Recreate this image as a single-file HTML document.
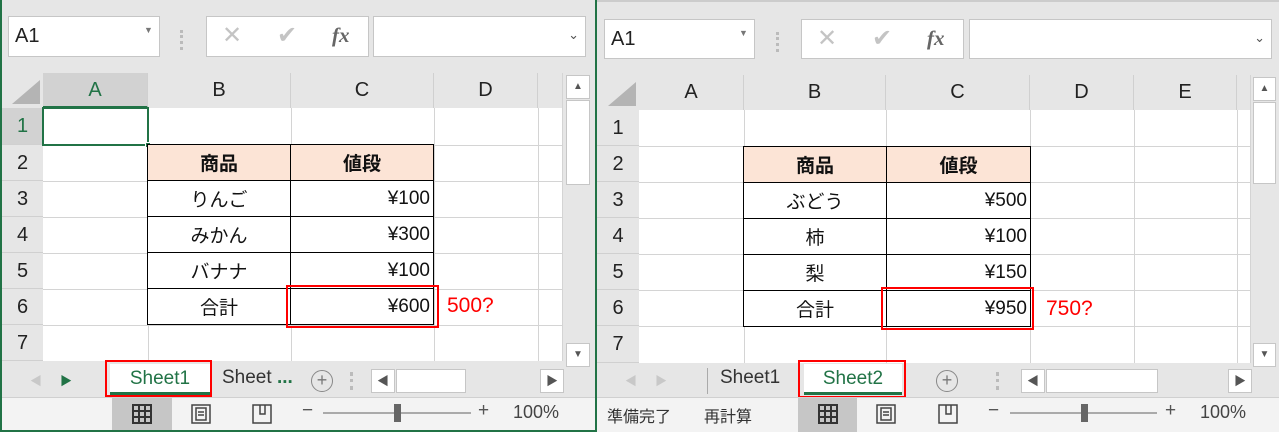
<!DOCTYPE html>
<html><head><meta charset="utf-8"><style>
*{box-sizing:border-box;margin:0;padding:0}
body{width:1279px;height:432px;overflow:hidden;background:#e6e6e6;font-family:"Liberation Sans","Noto Sans CJK JP",sans-serif;position:relative}
.a{position:absolute}
.box{position:absolute;background:#fff;border:1px solid #c6c6c6}
.hdr{position:absolute;background:#e6e6e6;color:#222;font-size:20px;text-align:center;border-right:1px solid #d0d0d0}
.rh{position:absolute;background:#e6e6e6;color:#222;font-size:20px;text-align:center;border-bottom:1px solid #d0d0d0}
.grid{position:absolute;background:#fff}
.vl{position:absolute;width:1px;background:#d4d4d4}
.hl{position:absolute;height:1px;background:#d4d4d4}
.c{position:absolute;font-size:19px;color:#111;border:1px solid #000;background:#fff;display:flex;align-items:center}
.red{position:absolute;border:2px solid #f00}
.sb{position:absolute;background:#e6e6e6}
.arrow{position:absolute;background:#fff;border:1px solid #c6c6c6;font-size:10px;color:#555;text-align:center}
</style></head><body>

<!-- LEFT WINDOW -->
<div class="a" style="left:0;top:0;width:597px;height:432px;border:2px solid #217346;border-top:none;background:#e6e6e6"></div>
<div class="box" style="left:8px;top:16px;width:152px;height:41px"><span class="a" style="left:6px;top:8px;font-size:20px;color:#222">A1</span><span class="a" style="left:135px;top:8px;font-size:9px;color:#777">▼</span></div>
<div class="a" style="left:180px;top:30px;width:3px;height:20px;border-left:3px dotted #bbb"></div>
<div class="box" style="left:206px;top:16px;width:163px;height:41px"><span class="a" style="left:15px;top:4px;font-size:24px;color:#c4c4c4">✕</span><span class="a" style="left:70px;top:4px;font-size:24px;color:#c4c4c4">✔</span><span class="a" style="left:125px;top:6px;font-size:21px;color:#666;font-family:'Liberation Serif',serif;font-style:italic;font-weight:bold">fx</span></div>
<div class="box" style="left:373px;top:16px;width:213px;height:41px"><span class="a" style="right:6px;top:10px;font-size:13px;color:#555">⌄</span></div>
<div class="a" style="left:12px;top:80px;width:0;height:0;border-left:28px solid transparent;border-bottom:24px solid #b4b4b4"></div>
<div class="hdr" style="left:43px;top:73px;width:105px;height:35px;line-height:35px;background:#d2d2d2;color:#217346;border-bottom:2px solid #217346">A</div>
<div class="hdr" style="left:148px;top:73px;width:143px;height:35px;line-height:35px">B</div>
<div class="hdr" style="left:291px;top:73px;width:143px;height:35px;line-height:35px">C</div>
<div class="hdr" style="left:434px;top:73px;width:104px;height:35px;line-height:35px">D</div>
<div class="grid" style="left:43px;top:108px;width:519px;height:253px"></div>
<div class="rh" style="left:2px;top:108px;width:41px;height:37px;line-height:37px;background:#d2d2d2;color:#217346">1</div>
<div class="rh" style="left:2px;top:145px;width:41px;height:36px;line-height:36px">2</div>
<div class="rh" style="left:2px;top:181px;width:41px;height:36px;line-height:36px">3</div>
<div class="rh" style="left:2px;top:217px;width:41px;height:36px;line-height:36px">4</div>
<div class="rh" style="left:2px;top:253px;width:41px;height:36px;line-height:36px">5</div>
<div class="rh" style="left:2px;top:289px;width:41px;height:36px;line-height:36px">6</div>
<div class="rh" style="left:2px;top:325px;width:41px;height:36px;line-height:36px">7</div>
<div class="vl" style="left:148px;top:108px;height:253px"></div><div class="vl" style="left:291px;top:108px;height:253px"></div><div class="vl" style="left:434px;top:108px;height:253px"></div><div class="vl" style="left:538px;top:108px;height:253px"></div><div class="vl" style="left:562px;top:73px;height:288px"></div>
<div class="hl" style="left:43px;top:145px;width:519px"></div><div class="hl" style="left:43px;top:181px;width:519px"></div><div class="hl" style="left:43px;top:217px;width:519px"></div><div class="hl" style="left:43px;top:253px;width:519px"></div><div class="hl" style="left:43px;top:289px;width:519px"></div><div class="hl" style="left:43px;top:325px;width:519px"></div>
<div class="a" style="left:42px;top:107px;width:107px;height:39px;border:2px solid #217346"></div>
<div class="a" style="left:145px;top:142px;width:6px;height:6px;background:#217346;border:1px solid #fff"></div>
<div class="c" style="left:147px;top:144px;width:144px;height:37px;background:#fce4d6;justify-content:center;font-weight:bold">商品</div>
<div class="c" style="left:290px;top:144px;width:144px;height:37px;background:#fce4d6;justify-content:center;font-weight:bold">値段</div>
<div class="c" style="left:147px;top:180px;width:144px;height:37px;justify-content:center">りんご</div>
<div class="c" style="left:290px;top:180px;width:144px;height:37px;justify-content:flex-end;padding-right:3px">¥100</div>
<div class="c" style="left:147px;top:216px;width:144px;height:37px;justify-content:center">みかん</div>
<div class="c" style="left:290px;top:216px;width:144px;height:37px;justify-content:flex-end;padding-right:3px">¥300</div>
<div class="c" style="left:147px;top:252px;width:144px;height:37px;justify-content:center">バナナ</div>
<div class="c" style="left:290px;top:252px;width:144px;height:37px;justify-content:flex-end;padding-right:3px">¥100</div>
<div class="c" style="left:147px;top:288px;width:144px;height:37px;justify-content:center">合計</div>
<div class="c" style="left:290px;top:288px;width:144px;height:37px;justify-content:flex-end;padding-right:3px">¥600</div>
<div class="red" style="left:286px;top:285px;width:153px;height:43px"></div>
<div class="a" style="left:447px;top:294px;font-size:21px;color:#f00">500?</div>
<div class="sb" style="left:563px;top:73px;width:30px;height:288px"></div>
<div class="arrow" style="left:566px;top:75px;width:24px;height:24px;line-height:22px">▲</div>
<div class="a" style="left:566px;top:100px;width:24px;height:85px;background:#fff;border:1px solid #c6c6c6"></div>
<div class="arrow" style="left:566px;top:343px;width:24px;height:24px;line-height:22px">▼</div>
<div class="a" style="left:30px;top:372px;font-size:12px;color:#c8c8c8">◀</div>
<div class="a" style="left:60px;top:372px;font-size:12px;color:#217346">▶</div>
<div class="a" style="left:110px;top:364px;width:100px;height:31px;background:#fff;border-bottom:3px solid #217346;color:#217346;font-size:19px;text-align:center;line-height:30px">Sheet1</div>
<div class="red" style="left:105px;top:360px;width:107px;height:37px"></div>
<div class="a" style="left:222px;top:367px;font-size:19px;color:#333">Sheet <b style="color:#217346">...</b></div>
<div class="a" style="left:311px;top:370px;width:22px;height:22px;border:1.5px solid #888;border-radius:50%;text-align:center;line-height:18px;font-size:18px;color:#777">+</div>
<div class="a" style="left:350px;top:372px;height:18px;border-left:3px dotted #bbb"></div>
<div class="arrow" style="left:371px;top:369px;width:24px;height:24px;line-height:22px;font-size:12px">◀</div>
<div class="a" style="left:396px;top:369px;width:70px;height:24px;background:#fff;border:1px solid #c6c6c6"></div>
<div class="arrow" style="left:540px;top:369px;width:24px;height:24px;line-height:22px;font-size:12px">▶</div>
<div class="a" style="left:2px;top:397px;width:593px;height:33px;background:#f3f3f3;border-top:1px solid #d0d0d0"></div>
<div class="a" style="left:112px;top:398px;width:60px;height:32px;background:#c6c6c6"></div>
<svg class="a" style="left:132px;top:404px" width="20" height="20"><path d="M1 1h18v18H1zM7 1v18M13 1v18M1 7h18M1 13h18" fill="none" stroke="#333" stroke-width="2"/></svg>
<svg class="a" style="left:191px;top:404px" width="20" height="20"><path d="M1 1h18v18H1zM5 4h10v12H5zM7 8h6M7 11h6" fill="none" stroke="#444" stroke-width="1.5"/></svg>
<svg class="a" style="left:252px;top:404px" width="20" height="20"><path d="M1 1h18v18H1zM8 1v9h5V1" fill="none" stroke="#444" stroke-width="1.5"/></svg>
<div class="a" style="left:302px;top:400px;font-size:19px;color:#555">−</div>
<div class="a" style="left:323px;top:412px;width:148px;height:2px;background:#aaa"></div>
<div class="a" style="left:394px;top:404px;width:7px;height:18px;background:#666"></div>
<div class="a" style="left:478px;top:400px;font-size:19px;color:#555">+</div>
<div class="a" style="left:513px;top:402px;font-size:18px;color:#444">100%</div>

<!-- RIGHT WINDOW -->
<div class="a" style="left:597px;top:0;width:682px;height:432px;background:#e6e6e6;border-top:2px solid #ccc"></div>
<div class="box" style="left:604px;top:19px;width:151px;height:40px"><span class="a" style="left:6px;top:8px;font-size:20px;color:#222">A1</span><span class="a" style="left:134px;top:8px;font-size:9px;color:#777">▼</span></div>
<div class="a" style="left:776px;top:32px;height:20px;border-left:3px dotted #bbb"></div>
<div class="box" style="left:801px;top:19px;width:163px;height:40px"><span class="a" style="left:15px;top:4px;font-size:24px;color:#c4c4c4">✕</span><span class="a" style="left:70px;top:4px;font-size:24px;color:#c4c4c4">✔</span><span class="a" style="left:125px;top:6px;font-size:21px;color:#666;font-family:'Liberation Serif',serif;font-style:italic;font-weight:bold">fx</span></div>
<div class="box" style="left:969px;top:19px;width:303px;height:40px"><span class="a" style="right:6px;top:10px;font-size:13px;color:#555">⌄</span></div>
<div class="a" style="left:608px;top:82px;width:0;height:0;border-left:28px solid transparent;border-bottom:24px solid #b4b4b4"></div>
<div class="hdr" style="left:639px;top:75px;width:105px;height:35px;line-height:35px">A</div>
<div class="hdr" style="left:744px;top:75px;width:142px;height:35px;line-height:35px">B</div>
<div class="hdr" style="left:886px;top:75px;width:144px;height:35px;line-height:35px">C</div>
<div class="hdr" style="left:1030px;top:75px;width:104px;height:35px;line-height:35px">D</div>
<div class="hdr" style="left:1134px;top:75px;width:103px;height:35px;line-height:35px">E</div>
<div class="grid" style="left:639px;top:110px;width:611px;height:253px"></div>
<div class="rh" style="left:597px;top:110px;width:42px;height:36px;line-height:36px">1</div>
<div class="rh" style="left:597px;top:146px;width:42px;height:36px;line-height:36px">2</div>
<div class="rh" style="left:597px;top:182px;width:42px;height:36px;line-height:36px">3</div>
<div class="rh" style="left:597px;top:218px;width:42px;height:36px;line-height:36px">4</div>
<div class="rh" style="left:597px;top:254px;width:42px;height:36px;line-height:36px">5</div>
<div class="rh" style="left:597px;top:290px;width:42px;height:36px;line-height:36px">6</div>
<div class="rh" style="left:597px;top:326px;width:42px;height:37px;line-height:36px">7</div>
<div class="vl" style="left:744px;top:110px;height:253px"></div><div class="vl" style="left:886px;top:110px;height:253px"></div><div class="vl" style="left:1030px;top:110px;height:253px"></div><div class="vl" style="left:1134px;top:110px;height:253px"></div><div class="vl" style="left:1237px;top:110px;height:253px"></div><div class="vl" style="left:1250px;top:75px;height:288px"></div>
<div class="hl" style="left:639px;top:146px;width:611px"></div><div class="hl" style="left:639px;top:182px;width:611px"></div><div class="hl" style="left:639px;top:218px;width:611px"></div><div class="hl" style="left:639px;top:254px;width:611px"></div><div class="hl" style="left:639px;top:290px;width:611px"></div><div class="hl" style="left:639px;top:326px;width:611px"></div>
<div class="c" style="left:743px;top:146px;width:144px;height:37px;background:#fce4d6;justify-content:center;font-weight:bold">商品</div>
<div class="c" style="left:886px;top:146px;width:145px;height:37px;background:#fce4d6;justify-content:center;font-weight:bold">値段</div>
<div class="c" style="left:743px;top:182px;width:144px;height:37px;justify-content:center">ぶどう</div>
<div class="c" style="left:886px;top:182px;width:145px;height:37px;justify-content:flex-end;padding-right:3px">¥500</div>
<div class="c" style="left:743px;top:218px;width:144px;height:37px;justify-content:center">柿</div>
<div class="c" style="left:886px;top:218px;width:145px;height:37px;justify-content:flex-end;padding-right:3px">¥100</div>
<div class="c" style="left:743px;top:254px;width:144px;height:37px;justify-content:center">梨</div>
<div class="c" style="left:886px;top:254px;width:145px;height:37px;justify-content:flex-end;padding-right:3px">¥150</div>
<div class="c" style="left:743px;top:290px;width:144px;height:37px;justify-content:center">合計</div>
<div class="c" style="left:886px;top:290px;width:145px;height:37px;justify-content:flex-end;padding-right:3px">¥950</div>
<div class="red" style="left:881px;top:287px;width:153px;height:43px"></div>
<div class="a" style="left:1046px;top:297px;font-size:21px;color:#f00">750?</div>
<div class="arrow" style="left:1253px;top:77px;width:23px;height:24px;line-height:22px">▲</div>
<div class="a" style="left:1253px;top:102px;width:23px;height:82px;background:#fff;border:1px solid #c6c6c6"></div>
<div class="arrow" style="left:1253px;top:343px;width:23px;height:24px;line-height:22px">▼</div>
<div class="a" style="left:625px;top:372px;font-size:12px;color:#c8c8c8">◀</div>
<div class="a" style="left:655px;top:372px;font-size:12px;color:#c8c8c8">▶</div>
<div class="a" style="left:707px;top:368px;height:26px;border-left:1px solid #aaa"></div>
<div class="a" style="left:720px;top:367px;font-size:19px;color:#333">Sheet1</div>
<div class="a" style="left:804px;top:364px;width:98px;height:31px;background:#fff;border-bottom:3px solid #217346;color:#217346;font-size:19px;text-align:center;line-height:30px">Sheet2</div>
<div class="red" style="left:798px;top:360px;width:108px;height:38px"></div>
<div class="a" style="left:936px;top:370px;width:22px;height:22px;border:1.5px solid #888;border-radius:50%;text-align:center;line-height:18px;font-size:18px;color:#777">+</div>
<div class="a" style="left:996px;top:372px;height:18px;border-left:3px dotted #bbb"></div>
<div class="arrow" style="left:1021px;top:369px;width:24px;height:24px;line-height:22px;font-size:12px">◀</div>
<div class="a" style="left:1046px;top:369px;width:112px;height:24px;background:#fff;border:1px solid #c6c6c6"></div>
<div class="arrow" style="left:1228px;top:369px;width:24px;height:24px;line-height:22px;font-size:12px">▶</div>
<div class="a" style="left:597px;top:397px;width:682px;height:35px;background:#f3f3f3;border-top:1px solid #d0d0d0"></div>
<div class="a" style="left:607px;top:403px;font-size:16px;color:#333">準備完了</div>
<div class="a" style="left:704px;top:403px;font-size:16px;color:#333">再計算</div>
<div class="a" style="left:798px;top:398px;width:59px;height:34px;background:#c6c6c6"></div>
<svg class="a" style="left:818px;top:404px" width="20" height="20"><path d="M1 1h18v18H1zM7 1v18M13 1v18M1 7h18M1 13h18" fill="none" stroke="#333" stroke-width="2"/></svg>
<svg class="a" style="left:876px;top:404px" width="20" height="20"><path d="M1 1h18v18H1zM5 4h10v12H5zM7 8h6M7 11h6" fill="none" stroke="#444" stroke-width="1.5"/></svg>
<svg class="a" style="left:938px;top:404px" width="20" height="20"><path d="M1 1h18v18H1zM8 1v9h5V1" fill="none" stroke="#444" stroke-width="1.5"/></svg>
<div class="a" style="left:988px;top:400px;font-size:19px;color:#555">−</div>
<div class="a" style="left:1010px;top:412px;width:147px;height:2px;background:#aaa"></div>
<div class="a" style="left:1081px;top:404px;width:7px;height:18px;background:#666"></div>
<div class="a" style="left:1165px;top:400px;font-size:19px;color:#555">+</div>
<div class="a" style="left:1200px;top:402px;font-size:18px;color:#444">100%</div>
</body></html>
